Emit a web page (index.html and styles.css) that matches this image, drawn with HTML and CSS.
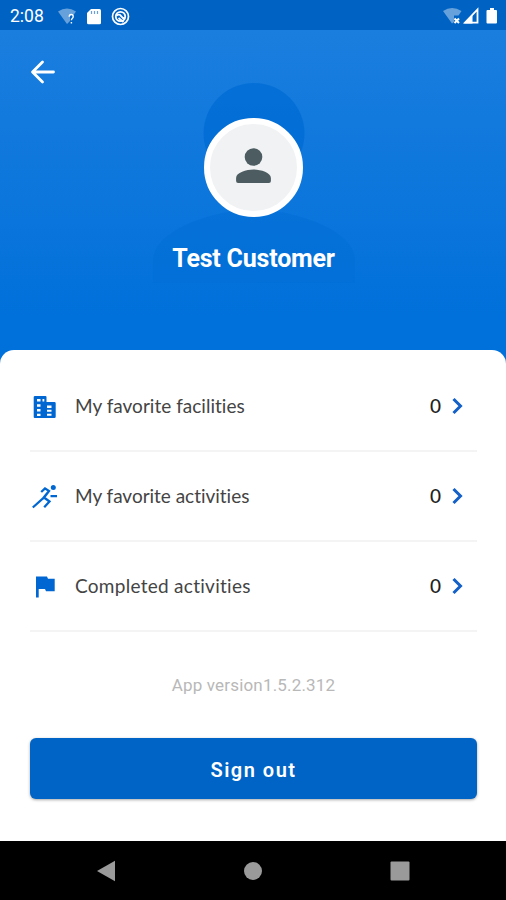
FILE: index.html
```html
<!DOCTYPE html>
<html lang="en">
<head>
<meta charset="utf-8">
<title>Profile</title>
<link rel="stylesheet" href="styles.css">
</head>
<body>
<div class="screen">
  <div class="status-bar">
    <span class="clock">2:08</span>
    <svg class="status-left" width="74" height="22" viewBox="0 0 74 22">
      <path d="M0 5.500Q9 -.5 18 5.500L15.500 9H12v6l-3 3Z" fill="#fff" fill-opacity=".4"/>
      <path d="M11.200 10.800q0-2.300 2-2.300t2 2q0 1.300-1.200 2.200-.6.5-.6 1.600M13.400 16v1.600" fill="none" stroke="#fff" stroke-width="1.400"/>
      <path d="M33 3h8.500q1.500 0 1.500 1.500v12.200q0 1.500-1.500 1.500H30.500q-1.500 0-1.500-1.500V7Z" fill="#fff"/>
      <path d="M33.500 5v3M36.500 5v3M39.500 5v3" stroke="#0063c4" stroke-opacity=".6" stroke-width="1.200"/>
      <circle cx="62.500" cy="10.500" r="8" fill="none" stroke="#fff" stroke-width="1.700"/>
      <circle cx="62.500" cy="10.500" r="4.700" fill="none" stroke="#fff" stroke-width="1.800"/>
      <path d="M58.500 9.500q3-2 4.500.5t4 2.500M60.500 12l5 4" fill="none" stroke="#fff" stroke-width="1.800"/>
    </svg>
    <svg class="status-right" width="56" height="22" viewBox="0 0 56 22">
      <path d="M1 6Q10 0 19.500 6L16.500 10.500H12V17l-2 1.500Z" fill="#fff" fill-opacity=".4"/>
      <path d="m12.500 13.500 4.500 4.500m0-4.500L12.500 18" stroke="#fff" stroke-width="2"/>
      <path d="M23 17.700 35.500 4.500v13.200Z" fill="none" stroke="#fff" stroke-width="1.800"/>
      <path d="M22 18.500 30.500 9.500v9Z" fill="#fff"/>
      <path d="M48 3h4v2h2q1 0 1 1V17.500q0 1-1 1h-8.500q-1 0-1-1V6q0-1 1-1H48Z" fill="#fff"/>
    </svg>
  </div>
  <header class="hero">
    <svg class="backdrop" width="202" height="204" viewBox="0 0 204 204">
      <circle cx="102" cy="51" r="51"/>
      <path d="M0 202V179C0 149 60 128 102 128S204 149 204 179v23Z" opacity=".55"/>
    </svg>
    <svg class="back" width="26" height="24" viewBox="0 0 26 24">
      <path d="M23.500 12H3M12.500 2 2.500 12l10 10" fill="none" stroke="#fff" stroke-width="2.800" stroke-linecap="round" stroke-linejoin="round"/>
    </svg>
    <div class="avatar">
      <svg width="36" height="36" viewBox="0 0 36 36" fill="#4c5c60">
        <circle cx="18.500" cy="9" r="8.800"/>
        <path d="M1.100 30C1.100 24.500 11.500 21.500 18.500 21.500S35.900 24.500 35.900 30v3q0 2-2 2H3.100q-2 0-2-2Z"/>
      </svg>
    </div>
    <h1 class="name">Test Customer</h1>
  </header>
  <main class="card">
    <ul class="menu">
      <li class="row">
        <svg class="icon" width="28" height="28" viewBox="0 0 28 28">
          <path fill="#0067d2" fill-rule="evenodd" d="M5 3h10.500q1 0 1 1v5h8q1.200 0 1.200 1.200V23.800q0 1.200-1.200 1.200H4.700q-1 0-1-1V4q0-1 1.300-1ZM7 6v2.500h3.500V6ZM7 11.200v2.500h3.500v-2.500ZM7 16v2.500h3.500V16ZM7 20.700v2.300h3.500v-2.300ZM12.500 6v2.500h1.800V6ZM17 12.500v2.500h4.500v-2.500ZM17 16.800v2h4.500v-2ZM17 20.800v2h4.500v-2Z"/>
        </svg>
        <span class="label facilities">My favorite facilities</span>
        <span class="count">0</span>
        <svg class="chevron" width="11" height="18" viewBox="0 0 11 18"><path d="m1.500 2 7 7-7 7"/></svg>
      </li>
      <li class="row">
        <svg class="icon" width="28" height="28" viewBox="0 0 28 28">
          <circle cx="23.300" cy="4.600" r="2.500" fill="#0067d2"/>
          <path d="M11.200 9 15 5.400l4 2.600-6.500 8M19 8l-5 6.500M2.800 24.500 14 14.500l5.500 4-5.300 5.800M20.500 13.200H27" fill="none" stroke="#0067d2" stroke-width="2.300"/>
        </svg>
        <span class="label activities">My favorite activities</span>
        <span class="count">0</span>
        <svg class="chevron" width="11" height="18" viewBox="0 0 11 18"><path d="m1.500 2 7 7-7 7"/></svg>
      </li>
      <li class="row">
        <svg class="icon" width="28" height="28" viewBox="0 0 28 28">
          <path d="M6 3.500h11l1 2.200h6.700v12.500H16L15 16H8.700v8.500H6Z" fill="#0067d2"/>
        </svg>
        <span class="label completed">Completed activities</span>
        <span class="count">0</span>
        <svg class="chevron" width="11" height="18" viewBox="0 0 11 18"><path d="m1.500 2 7 7-7 7"/></svg>
      </li>
    </ul>
    <p class="version">App version1.5.2.312</p>
    <button class="sign-out">Sign out</button>
  </main>
  <nav class="nav-bar">
    <svg width="20" height="22" viewBox="0 0 20 22"><path d="M1 11 19 .8v20.400Z"/></svg>
    <svg width="20" height="20" viewBox="0 0 20 20"><circle cx="10" cy="10" r="9"/></svg>
    <svg width="20" height="20" viewBox="0 0 20 20"><rect x=".5" y=".5" width="19" height="19" rx="1"/></svg>
  </nav>
</div>
</body>
</html>
```

FILE: styles.css
```css
* {
  box-sizing: border-box;
}

body {
  margin: 0;
  font-family: Roboto, "Liberation Sans", sans-serif;
  background: #0070da;
}

.screen {
  display: flex;
  flex-direction: column;
  height: 900px;
  overflow: hidden;
}

.status-bar {
  display: flex;
  align-items: center;
  height: 30px;
  padding: 1px 8px 0 10px;
  background: #0063c4;
  color: #fff;
}

.clock {
  width: 48px;
  font-size: 17.5px;
  line-height: 30px;
}

.status-left {
  margin-top: 2px;
}

.status-right {
  margin: 1px 0 0 auto;
}

.hero {
  position: relative;
  display: flex;
  flex-direction: column;
  align-items: center;
  height: 320px;
  background: linear-gradient(#1a7ede, #0a75dc 60%, #0070da 90%);
}

.backdrop {
  position: absolute;
  top: 52px;
  left: 153px;
  fill: #006dd4;
  fill-opacity: .8;
}

.back {
  align-self: flex-start;
  margin: 30px 0 0 30px;
}

.avatar {
  position: relative;
  display: flex;
  align-items: center;
  justify-content: center;
  width: 99px;
  height: 99px;
  margin-top: 34px;
  padding-bottom: 3px;
  border: 6px solid #fff;
  border-radius: 50%;
  background: #f0f2f4;
}

.name {
  position: relative;
  margin: 27px 0 0 1px;
  color: #fff;
  font-size: 25px;
  font-weight: 700;
  letter-spacing: -.2px;
  line-height: 30px;
}

.card {
  display: flex;
  flex-direction: column;
  height: 491px;
  padding: 12px 29px 0 30px;
  border-radius: 14px 14px 0 0;
  background: #fff;
}

.menu {
  margin: 0;
  padding: 0;
  list-style: none;
}

.row {
  display: flex;
  align-items: center;
  height: 90px;
  border-bottom: 2px solid #f4f4f4;
}

.icon {
  margin-top: 1px;
}

.label {
  flex: 1;
  margin: -2px 0 0 17px;
  color: #444;
  font-family: Lato, sans-serif;
  font-size: 19px;
}

.facilities {
  letter-spacing: .02px;
}

.activities {
  letter-spacing: -.02px;
}

.completed {
  letter-spacing: .28px;
}

.count {
  margin: -2px 11px 0 0;
  color: #222;
  font-family: Lato, sans-serif;
  font-size: 19px;
  font-weight: 500;
}

.chevron {
  margin-right: 14px;
  fill: none;
  stroke: #1260c8;
  stroke-width: 3;
}

.version {
  margin: 41px 0 0;
  color: #b8b8b8;
  font-size: 17px;
  letter-spacing: .18px;
  line-height: 24px;
  text-align: center;
}

.sign-out {
  height: 61px;
  margin-top: 41px;
  padding-top: 3px;
  border: 0;
  border-radius: 6px;
  background: #0064c6;
  box-shadow: 0 1px 3px rgba(0, 0, 0, .35);
  color: #fff;
  font-family: inherit;
  font-size: 20px;
  font-weight: 600;
  letter-spacing: 1.5px;
}

.nav-bar {
  display: flex;
  align-items: center;
  justify-content: space-between;
  height: 59px;
  padding: 0 96px 0 96px;
  background: #000;
  fill: #9a9a9a;
}
```
